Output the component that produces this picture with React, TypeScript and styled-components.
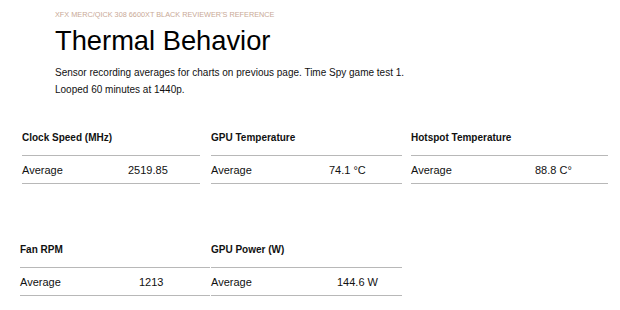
import styled, { createGlobalStyle } from "styled-components";

const GlobalStyle = createGlobalStyle`
    body {
        margin: 0;
        background: #ffffff;
        font-family: "Liberation Sans", Arial, sans-serif;
        color: #111111;
    }
`;

const Page = styled.div`
    width: 620px;
    height: 310px;
    overflow: hidden;
    padding-top: 10px;
    box-sizing: border-box;
`;

const Header = styled.div`
    padding-left: 55px;
`;

const Kicker = styled.div`
    font-size: 7.3px;
    line-height: 10px;
    color: #c9a996;
    text-transform: uppercase;
`;

const Title = styled.h1`
    margin: 4px 0 0;
    font-size: 27.3px;
    font-weight: 400;
    line-height: 34px;
    color: #000000;
`;

const Intro = styled.p`
    margin: 6px 0 0;
    font-size: 10px;
    line-height: 17px;
    color: #111111;
`;

const TableRow = styled.div<{ $left: number; $top: number }>`
    display: flex;
    margin-top: ${(p) => p.$top}px;
    padding-left: ${(p) => p.$left}px;
`;

const Table = styled.div<{ $width: number; $gap: number }>`
    width: ${(p) => p.$width}px;
    margin-right: ${(p) => p.$gap}px;
`;

const TableHead = styled.div`
    height: 36px;
    display: flex;
    align-items: center;
    font-size: 10px;
    font-weight: 700;
    border-bottom: 1px solid #b8b8b8;
`;

const DataRow = styled.div<{ $valueX: number }>`
    height: 27px;
    display: grid;
    grid-template-columns: ${(p) => p.$valueX}px 1fr;
    align-items: center;
    font-size: 11px;
    border-bottom: 1px solid #b8b8b8;
`;

type Stat = { title: string; value: string; width: number; gap: number; valueX: number };

const topRow: Stat[] = [
    { title: "Clock Speed (MHz)", value: "2519.85", width: 178, gap: 11, valueX: 106 },
    { title: "GPU Temperature", value: "74.1 °C", width: 191, gap: 9, valueX: 118 },
    { title: "Hotspot Temperature", value: "88.8 C°", width: 197, gap: 0, valueX: 124 },
];

const bottomRow: Stat[] = [
    { title: "Fan RPM", value: "1213", width: 190, gap: 1, valueX: 119 },
    { title: "GPU Power (W)", value: "144.6 W", width: 191, gap: 0, valueX: 126 },
];

function StatTable({ s }: { s: Stat }) {
    return (
        <Table $width={s.width} $gap={s.gap}>
            <TableHead>{s.title}</TableHead>
            <DataRow $valueX={s.valueX}>
                <span>Average</span>
                <span>{s.value}</span>
            </DataRow>
        </Table>
    );
}

export default function App() {
    return (
        <Page>
            <GlobalStyle />
            <Header>
                <Kicker>XFX MERC/QICK 308 6600XT BLACK REVIEWER'S REFERENCE</Kicker>
                <Title>Thermal Behavior</Title>
                <Intro>
                    Sensor recording averages for charts on previous page. Time Spy game test 1.
                    <br />
                    Looped 60 minutes at 1440p.
                </Intro>
            </Header>
            <TableRow $left={22} $top={21}>
                {topRow.map((s) => (
                    <StatTable key={s.title} s={s} />
                ))}
            </TableRow>
            <TableRow $left={20} $top={47}>
                {bottomRow.map((s) => (
                    <StatTable key={s.title} s={s} />
                ))}
            </TableRow>
        </Page>
    );
}
